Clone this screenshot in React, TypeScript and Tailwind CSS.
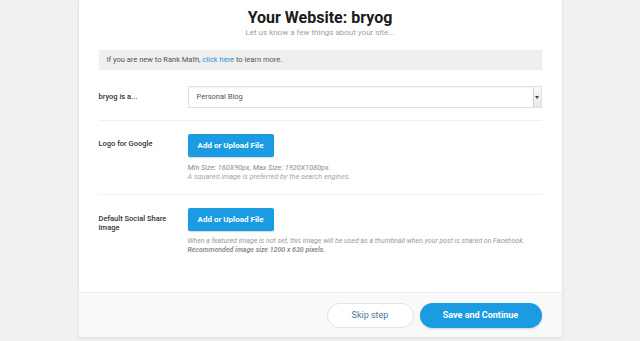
import React from 'react'

const font = { fontFamily: 'Roboto, "Liberation Sans", Arial, sans-serif' }

function UploadButton() {
  return (
    <button className="block w-[86px] h-[23px] bg-[#1a9be2] text-white text-[8px] font-bold rounded-[2px] shadow-[0_1px_1px_rgba(0,0,0,0.15)]">
      Add or Upload File
    </button>
  )
}

export default function App() {
  return (
    <div className="w-[640px] h-[341px] bg-[#f1f1f1] overflow-hidden" style={font}>
      <div className="w-[485px] h-[338px] mx-auto bg-white border-x border-b border-[#e6e6e6] shadow-[0_1px_2px_rgba(0,0,0,0.06)] flex flex-col">
        <div className="flex-1 px-5 pt-[8px]">
          <h1 className="text-center text-[16px] leading-[20px] font-bold text-[#1b1b1b]">Your Website: bryog</h1>
          <p className="text-center text-[8px] leading-[10px] text-[#a0a0a0]">Let us know a few things about your site...</p>

          <div className="mt-[12px] h-[20px] bg-[#efefef] flex items-center px-2 text-[7.5px] text-[#555]">
            <span>
              If you are new to Rank Math, <span className="text-[#2d8fd8]">click here</span> to learn more.
            </span>
          </div>

          {/* site type */}
          <div className="flex items-center pt-[16px] pb-[12px] border-b border-[#f0f0f0]">
            <div className="w-[89px] text-[7.5px] text-[#333] font-medium">bryog is a...</div>
            <div className="flex-1 h-[22px] border border-[#e2e2e2] shadow-[inset_0_1px_2px_rgba(0,0,0,0.05)] flex items-center justify-between pl-2">
              <span className="text-[7.5px] text-[#555]">Personal Blog</span>
              <div className="w-[8px] h-[20px] border-l border-[#cfcfcf] bg-gradient-to-b from-[#fafafa] to-[#e8e8e8] flex items-center justify-center">
                <span className="block w-0 h-0 border-l-[2px] border-r-[2px] border-t-[3px] border-l-transparent border-r-transparent border-t-[#444]" />
              </div>
            </div>
          </div>

          {/* logo */}
          <div className="flex pt-[13px] pb-[13px] border-b border-[#f0f0f0]">
            <div className="w-[89px] pt-[5px] text-[7.5px] leading-[9px] text-[#333] font-medium">Logo for Google</div>
            <div className="flex-1">
              <UploadButton />
              <div className="mt-[6px] text-[7.3px] leading-[9px] italic text-[#8a8a8a]">
                <div>Min Size: 160X90px, Max Size: 1920X1080px.</div>
                <div className="text-[#a5a5a5]">A squared image is preferred by the search engines.</div>
              </div>
            </div>
          </div>

          {/* social */}
          <div className="flex pt-[13px]">
            <div className="w-[89px] pt-[6px] text-[7.5px] leading-[9px] text-[#333] font-medium">
              Default Social Share
              <br />
              Image
            </div>
            <div className="flex-1">
              <UploadButton />
              <div className="mt-[6px] text-[7px] leading-[9px] italic text-[#999]">
                <div>When a featured image is not set, this image will be used as a thumbnail when your post is shared on Facebook.</div>
                <div className="font-semibold text-[#8a8a8a]">Recommended image size 1200 x 630 pixels.</div>
              </div>
            </div>
          </div>
        </div>

        <div className="h-[45px] bg-[#f9f9f9] border-t border-[#efefef] flex items-start justify-end gap-[6px] px-5 pt-[10px]">
          <button className="w-[87px] h-[25px] rounded-full bg-white border border-[#e3e3e3] text-[9px] text-[#4b78a3]">
            Skip step
          </button>
          <button className="w-[122px] h-[25px] rounded-full bg-[#1a9be2] text-white text-[9px] font-bold shadow-[0_1px_2px_rgba(0,0,0,0.15)]">
            Save and Continue
          </button>
        </div>
      </div>
    </div>
  )
}
